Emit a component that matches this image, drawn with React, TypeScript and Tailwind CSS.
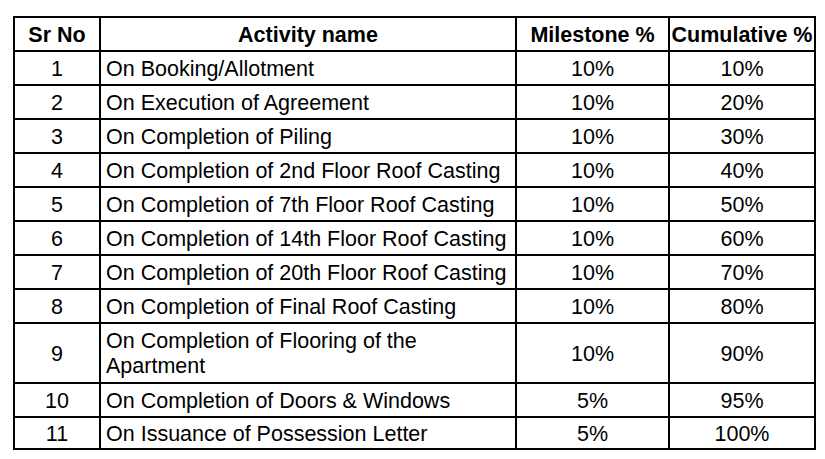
import React from "react";

const rows: { n: string; a: React.ReactNode; m: string; c: string; h: string }[] = [
  { n: "1", a: "On Booking/Allotment", m: "10%", c: "10%", h: "h-[32px]" },
  { n: "2", a: "On Execution of Agreement", m: "10%", c: "20%", h: "h-[32px]" },
  { n: "3", a: "On Completion of Piling", m: "10%", c: "30%", h: "h-[32px]" },
  { n: "4", a: "On Completion of 2nd Floor Roof Casting", m: "10%", c: "40%", h: "h-[32px]" },
  { n: "5", a: "On Completion of 7th Floor Roof Casting", m: "10%", c: "50%", h: "h-[32px]" },
  { n: "6", a: "On Completion of 14th Floor Roof Casting", m: "10%", c: "60%", h: "h-[32px]" },
  { n: "7", a: "On Completion of 20th Floor Roof Casting", m: "10%", c: "70%", h: "h-[32px]" },
  { n: "8", a: "On Completion of Final Roof Casting", m: "10%", c: "80%", h: "h-[32px]" },
  {
    n: "9",
    a: (
      <>
        On Completion of Flooring of the
        <br />
        Apartment
      </>
    ),
    m: "10%",
    c: "90%",
    h: "h-[58px]",
  },
  { n: "10", a: "On Completion of Doors & Windows", m: "5%", c: "95%", h: "h-[32px]" },
  { n: "11", a: "On Issuance of Possession Letter", m: "5%", c: "100%", h: "h-[30px]" },
];

export default function App() {
  return (
    <div className="w-[825px] h-[459px] bg-white pl-[13px] pt-[16px] text-black" style={{ fontFamily: '"Liberation Sans", Arial, sans-serif' }}>
      <div className="inline-grid grid-cols-[84px_414px_151px_144px] gap-[2px] p-[2px] bg-black text-[21.5px] leading-[25px]">
        <div className="h-[32px] pt-[2px] bg-white flex items-center justify-center font-bold">Sr No</div>
        <div className="h-[32px] pt-[2px] bg-white flex items-center justify-center font-bold">Activity name</div>
        <div className="h-[32px] pt-[2px] bg-white flex items-center justify-center font-bold">Milestone %</div>
        <div className="h-[32px] pt-[2px] bg-white flex items-center justify-center font-bold whitespace-nowrap">Cumulative %</div>
        {rows.map((r) => (
          <React.Fragment key={r.n}>
            <div className={`${r.h} pt-[2px] bg-white flex items-center justify-center`}>{r.n}</div>
            <div className={`${r.h} pt-[2px] bg-white flex items-center pl-[5px] whitespace-nowrap`}>
              <span>{r.a}</span>
            </div>
            <div className={`${r.h} pt-[2px] bg-white flex items-center justify-center`}>{r.m}</div>
            <div className={`${r.h} pt-[2px] bg-white flex items-center justify-center`}>{r.c}</div>
          </React.Fragment>
        ))}
      </div>
    </div>
  );
}
